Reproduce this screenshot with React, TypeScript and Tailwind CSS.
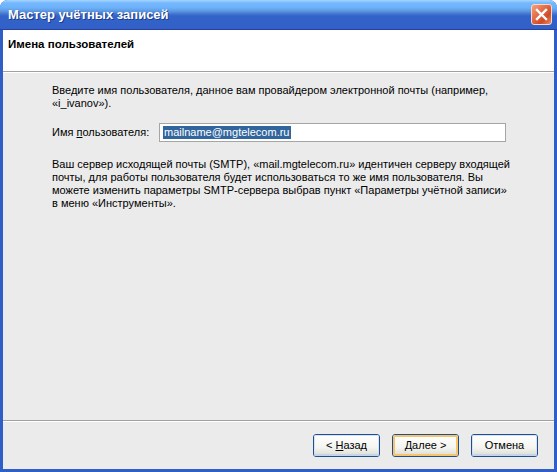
import React from "react";

const font = { fontFamily: '"Liberation Sans", Arial, sans-serif' };

function CloseButton() {
  return (
    <div className="flex h-[21px] w-[21px] items-center justify-center rounded-[3px] border border-[#f6d8cc] bg-[linear-gradient(135deg,#f2a480_0%,#e46c46_40%,#d04a28_70%,#ec8a62_100%)]">
      <svg width="13" height="13" viewBox="0 0 13 13">
        <path d="M2 2 L11 11 M11 2 L2 11" stroke="#fff" strokeWidth="2.4" strokeLinecap="square" />
      </svg>
    </div>
  );
}

function XpButton({ children, isDefault }: { children: React.ReactNode; isDefault?: boolean }) {
  return (
    <button
      type="button"
      className="h-[23px] w-[67px] rounded-[3px] border border-[#1c4f8e] bg-[linear-gradient(180deg,#ffffff_0%,#f4f4f0_60%,#dcdcd6_100%)] p-0 text-[11px] text-black"
      style={font}
    >
      <span
        className={
          isDefault
            ? "flex h-full w-full items-center justify-center rounded-[2px] shadow-[inset_0_0_0_2px_#f7c46a]"
            : "flex h-full w-full items-center justify-center rounded-[2px] shadow-[inset_0_-2px_0_#c9d3e6,inset_0_0_0_1px_#d8e2f2]"
        }
      >
        {children}
      </span>
    </button>
  );
}

export default function App() {
  return (
    <div className="h-[472px] w-[557px] bg-white" style={font}>
      <div className="flex h-full flex-col overflow-hidden rounded-t-[8px] bg-[#2f5fc6]">
        {/* Title bar */}
        <div className="flex h-[30px] shrink-0 items-center justify-between border-b border-[#2a3f9c] bg-[linear-gradient(180deg,#a8d4ff_0px,#74b8ff_3px,#6cb0f8_8px,#5d98e0_11px,#4474d0_14px,#3362c8_16px,#3160c8_29px)] pl-[8px] pr-[5px]">
          <span className="text-[13px] font-bold text-white [text-shadow:1px_1px_0_#1c3a86]">
            Мастер учётных записей
          </span>
          <CloseButton />
        </div>

        {/* Client area */}
        <div className="mx-[3px] mb-[3px] flex flex-1 flex-col bg-[#ebebeb]">
          {/* Header */}
          <div className="h-[42px] shrink-0 border-b border-[#a0a0a0] bg-white pl-[5px] pt-[6px] leading-[14px]">
            <span className="text-[11.5px] font-bold text-black">Имена пользователей</span>
          </div>

          {/* Body */}
          <div className="flex-1 border-t border-white pl-[49px] pr-[40px] pt-[11px] text-[11px] leading-[13px] text-black">
            <p>
              Введите имя пользователя, данное вам провайдером электронной почты (например,
              <br />
              «i_ivanov»).
            </p>

            <div className="mt-[13px] flex items-center">
              <span className="w-[107px]">
                Имя <span className="underline">п</span>ользователя:
              </span>
              <div className="flex h-[19px] w-[347px] items-center border border-[#a5a5a5] bg-white pl-[3px]">
                <span className="bg-[#31659e] px-[1px] text-white">mailname@mgtelecom.ru</span>
              </div>
            </div>

            <p className="mt-[16px]">
              Ваш сервер исходящей почты (SMTP), «mail.mgtelecom.ru» идентичен серверу входящей
              <br />
              почты, для работы пользователя будет использоваться то же имя пользователя. Вы
              <br />
              можете изменить параметры SMTP-сервера выбрав пункт «Параметры учётной записи»
              <br />в меню «Инструменты».
            </p>
          </div>

          {/* Footer */}
          <div className="h-[49px] shrink-0 border-t border-[#a0a0a0]">
            <div className="flex h-full items-start justify-end gap-[12px] border-t border-white pr-[16px] pt-[12px]">
              <XpButton>
                &lt;&nbsp;<span className="underline">Н</span>азад
              </XpButton>
              <XpButton isDefault>
                <span className="underline">Д</span>алее&nbsp;&gt;
              </XpButton>
              <XpButton>Отмена</XpButton>
            </div>
          </div>
        </div>
      </div>
    </div>
  );
}
